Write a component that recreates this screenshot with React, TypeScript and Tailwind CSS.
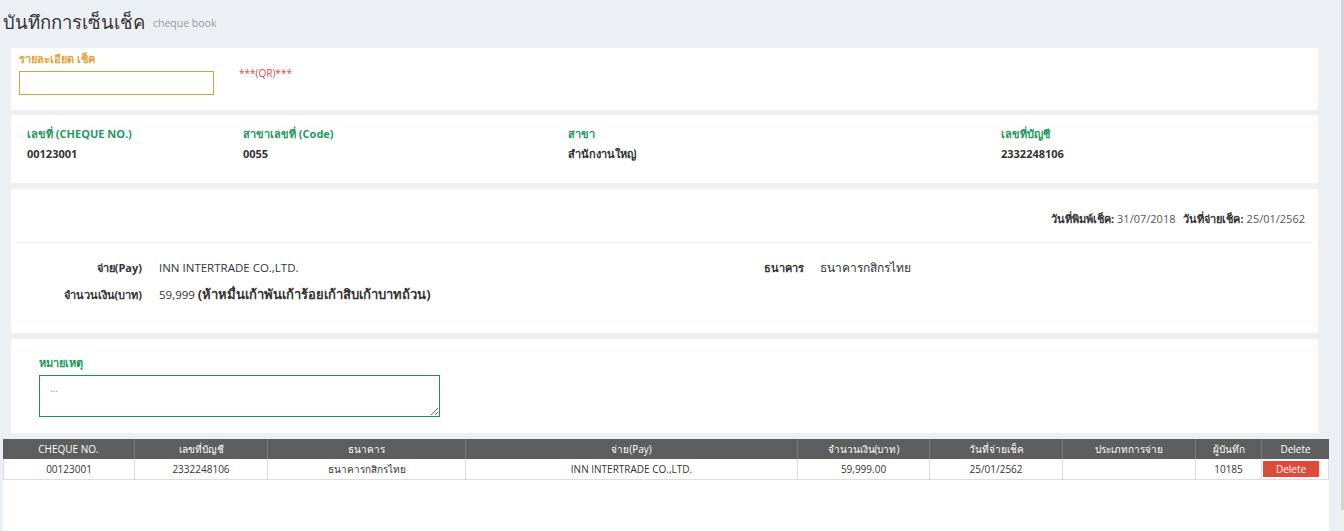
import React from 'react';

const font = { fontFamily: '"Open Sans", "Noto Sans", "DejaVu Sans", sans-serif' };

type Row = {
  chequeNo: string;
  account: string;
  bank: string;
  pay: string;
  amount: string;
  payDate: string;
  payType: string;
  recorder: string;
};

const rows: Row[] = [
  {
    chequeNo: '00123001',
    account: '2332248106',
    bank: 'ธนาคารกสิกรไทย',
    pay: 'INN INTERTRADE CO.,LTD.',
    amount: '59,999.00',
    payDate: '25/01/2562',
    payType: '',
    recorder: '10185',
  },
];

const columns = [
  { label: 'CHEQUE NO.', w: 'w-[132px]' },
  { label: 'เลขที่บัญชี', w: 'w-[133px]' },
  { label: 'ธนาคาร', w: 'w-[198px]' },
  { label: 'จ่าย(Pay)', w: 'w-[332px]' },
  { label: 'จำนวนเงิน(บาท)', w: 'w-[132px]' },
  { label: 'วันที่จ่ายเช็ค', w: 'w-[133px]' },
  { label: 'ประเภทการจ่าย', w: 'w-[133px]' },
  { label: 'ผู้บันทึก', w: 'w-[66px]' },
  { label: 'Delete', w: 'flex-1' },
];

const InfoItem: React.FC<{ label: string; value: string; className: string }> = ({ label, value, className }) => (
  <div className={className}>
    <div className="text-[11px] font-bold text-[#22995a] leading-[14px]">{label}</div>
    <div className="mt-[6px] text-[11px] font-bold text-[#333] leading-[14px]">{value}</div>
  </div>
);

export default function App() {
  return (
    <div className="flex h-[531px] w-[1344px] overflow-hidden bg-[#ecf0f5] text-[#333]" style={font}>
      <div className="flex w-[1341px] flex-col">
        {/* page title */}
        <div className="flex h-[48px] items-start px-[3px] pt-[8px]">
          <h1 className="text-[18.5px] font-normal leading-[28px] text-[#333]">บันทึกการเซ็นเช็ค</h1>
          <span className="ml-[8px] mt-[8px] text-[10.5px] leading-[14px] text-[#999]">cheque book</span>
        </div>

        <div className="ml-[11px] flex w-[1307px] flex-col">
          {/* scan box */}
          <div className="h-[62px] bg-white px-[8px] pt-[4px]">
            <div className="text-[11px] font-bold leading-[14px] text-[#e2a13a]">รายละเอียด เช็ค</div>
            <div className="mt-[5px] flex items-start">
              <input className="h-[24px] w-[195px] border border-[#d9a235] bg-white px-2 text-[12px] outline-none" />
              <span className="ml-[25px] mt-[-5px] text-[10px] leading-[14px] text-[#d24b4b]">***(QR)***</span>
            </div>
          </div>

          {/* cheque info */}
          <div className="mt-[5px] flex h-[68px] bg-white pl-[16px] pt-[12px]">
            <InfoItem className="w-[216px]" label="เลขที่ (CHEQUE NO.)" value="00123001" />
            <InfoItem className="w-[325px]" label="สาขาเลขที่ (Code)" value="0055" />
            <InfoItem className="w-[433px]" label="สาขา" value="สำนักงานใหญ่" />
            <InfoItem className="flex-1" label="เลขที่บัญชี" value="2332248106" />
          </div>

          {/* cheque detail */}
          <div className="mt-[6px] h-[144px] bg-white px-[5px]">
            <div className="flex h-[54px] items-end justify-end border-b border-[#f0f0f0] pb-[16px] pr-[8px] text-[11px] leading-[14px]">
              <span className="font-bold">วันที่พิมพ์เช็ค:</span>
              <span className="ml-[3px] text-[#555]">31/07/2018</span>
              <span className="ml-[8px] font-bold">วันที่จ่ายเช็ค:</span>
              <span className="ml-[3px] text-[#555]">25/01/2562</span>
            </div>
            <div className="flex pt-[17px]">
              <div className="flex w-[748px] flex-col gap-[10px]">
                <div className="flex items-center">
                  <div className="w-[126px] text-right text-[11px] font-bold leading-[16px]">จ่าย(Pay)</div>
                  <div className="ml-[17px] text-[11.5px] leading-[16px]">INN INTERTRADE CO.,LTD.</div>
                </div>
                <div className="flex items-center">
                  <div className="w-[126px] text-right text-[11px] font-bold leading-[16px]">จำนวนเงิน(บาท)</div>
                  <div className="ml-[17px] text-[11.5px] leading-[16px]">
                    59,999 <span className="text-[13px] font-bold">(ห้าหมื่นเก้าพันเก้าร้อยเก้าสิบเก้าบาทถ้วน)</span>
                  </div>
                </div>
              </div>
              <div className="flex items-center self-start">
                <div className="w-[40px] text-right text-[11px] font-bold leading-[16px]">ธนาคาร</div>
                <div className="ml-[16px] text-[12px] leading-[16px]">ธนาคารกสิกรไทย</div>
              </div>
            </div>
          </div>

          {/* remark */}
          <div className="mt-[6px] h-[94px] bg-white pl-[28px] pt-[17px]">
            <div className="text-[11px] font-bold leading-[14px] text-[#22995a]">หมายเหตุ</div>
            <textarea
              placeholder="..."
              className="mt-[5px] block h-[42px] w-[401px] border border-[#1f8f5a] px-[10px] py-[6px] text-[10px] leading-[12px] text-[#333] outline-none placeholder:text-[#999]"
            />
          </div>
        </div>

        {/* list */}
        <div className="ml-[3px] mt-[6px] w-[1326px] flex-1 bg-white">
          <div className="flex h-[20px] bg-[#5e5e5e] text-[10px] text-white">
            {columns.map((c, i) => (
              <div
                key={c.label}
                className={`${c.w} flex items-center justify-center ${i < columns.length - 1 ? 'border-r border-[#7a7a7a]' : ''}`}
              >
                {c.label}
              </div>
            ))}
          </div>
          {rows.map((r) => (
            <div key={r.chequeNo} className="flex h-[21px] border-b border-[#dddddd] text-[10px] text-[#333]">
              <div className="flex w-[132px] items-center justify-center border-r border-l border-[#dddddd]">{r.chequeNo}</div>
              <div className="flex w-[133px] items-center justify-center border-r border-[#dddddd]">{r.account}</div>
              <div className="flex w-[198px] items-center justify-center border-r border-[#dddddd]">{r.bank}</div>
              <div className="flex w-[332px] items-center justify-center border-r border-[#dddddd]">{r.pay}</div>
              <div className="flex w-[132px] items-center justify-center border-r border-[#dddddd]">{r.amount}</div>
              <div className="flex w-[133px] items-center justify-center border-r border-[#dddddd]">{r.payDate}</div>
              <div className="flex w-[133px] items-center justify-center border-r border-[#dddddd]">{r.payType}</div>
              <div className="flex w-[66px] items-center justify-center border-r border-[#dddddd]">{r.recorder}</div>
              <div className="flex flex-1 items-center border-r border-[#dddddd] pl-[1px]">
                <button className="h-[16px] w-[56px] bg-[#dd4b39] text-[10px] leading-[16px] text-white">Delete</button>
              </div>
            </div>
          ))}
        </div>
      </div>
      <div className="h-[510px] w-[3px] bg-[#cfd2d6]" />
    </div>
  );
}
